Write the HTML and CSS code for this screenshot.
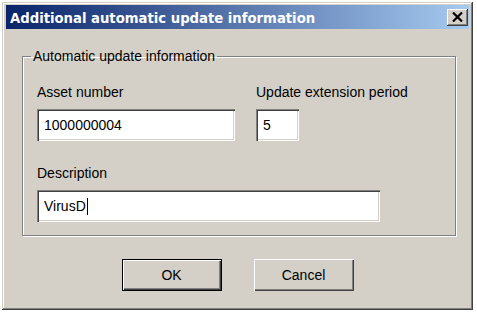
FILE: index.html
```html
<!DOCTYPE html>
<html lang="en">
<head>
    <meta charset="UTF-8">
    <title>Additional automatic update information</title>
    <link rel="stylesheet" href="styles.css">
</head>
<body>
    <div class="window">
        <div class="titlebar">
            <span class="title">Additional automatic update information</span>
            <div class="close">
                <svg width="11" height="10" viewBox="0 0 11 10">
                    <path d="M1 0.5 L10 9.5 M10 0.5 L1 9.5" stroke="#000" stroke-width="2.2"/>
                </svg>
            </div>
        </div>

        <fieldset class="group">
            <legend>Automatic update information</legend>
            <div class="row">
                <div class="field">
                    <label>Asset number</label>
                    <div class="textbox asset">1000000004</div>
                </div>
                <div class="field">
                    <label>Update extension period</label>
                    <div class="textbox period">5</div>
                </div>
            </div>
            <div class="field desc-field">
                <label>Description</label>
                <div class="textbox desc">VirusD<span class="caret"></span></div>
            </div>
        </fieldset>

        <div class="actions">
            <button class="btn default">OK</button>
            <button class="btn">Cancel</button>
        </div>
    </div>
</body>
</html>
```

FILE: styles.css
```css
body {
    margin: 0;
    padding: 2px;
    background: #fff;
    font-family: "Liberation Sans", Arial, sans-serif;
    font-size: 14px;
    color: #000;
}

.window {
    width: 471px;
    height: 308px;
    box-sizing: border-box;
    padding: 3px 4px;
    background: #d4d0c8;
    box-shadow: inset -1px -1px #404040, inset 1px 1px #d4d0c8, inset -2px -2px #808080, inset 2px 2px #fff;
}

.titlebar {
    height: 24px;
    display: flex;
    align-items: center;
    justify-content: space-between;
    padding: 0 1px 0 4px;
    background: linear-gradient(to right, #0a246a, #a6caf0);
    color: #fff;
    font-family: "DejaVu Sans Condensed", "DejaVu Sans", sans-serif;
    font-weight: bold;
    font-size: 14.7px;
}

.close {
    width: 21px;
    height: 17px;
    box-sizing: border-box;
    background: #d4d0c8;
    display: flex;
    align-items: center;
    justify-content: center;
    box-shadow: inset -1px -1px #404040, inset 1px 1px #fff, inset -2px -2px #808080;
}

.group {
    margin: 19px 0 0 16px;
    width: 434px;
    box-sizing: border-box;
    border: 1px solid #808080;
    box-shadow: 1px 1px #fff, inset 1px 1px #fff;
    padding: 20px 14px 13px;
}

.group legend {
    padding: 0 2px;
    margin-left: -6px;
    line-height: 16px;
}

.row {
    display: flex;
    gap: 21px;
}

.field label {
    display: block;
    line-height: 16px;
    margin-bottom: 9px;
}

.desc-field {
    margin-top: 24px;
}

.textbox {
    box-sizing: border-box;
    height: 32px;
    line-height: 32px;
    padding: 0 7px;
    background: #fff;
    box-shadow: inset 1px 1px #808080, inset 2px 2px #404040, inset -1px -1px #fff, inset -2px -2px #d4d0c8;
}

.asset {
    width: 198px;
}

.period {
    width: 43px;
}

.desc {
    width: 343px;
    display: flex;
    align-items: center;
}

.caret {
    display: inline-block;
    width: 1px;
    height: 17px;
    background: #000;
    margin-left: 1px;
}

.actions {
    display: flex;
    justify-content: center;
    gap: 32px;
    margin-top: 23px;
}

.btn {
    width: 100px;
    height: 32px;
    border: none;
    background: #d4d0c8;
    font-family: inherit;
    font-size: 14px;
    color: #000;
    box-shadow: inset 1px 1px #fff, inset -1px -1px #404040, inset -2px -2px #808080;
}

.btn.default {
    border: 1px solid #000;
}
```
